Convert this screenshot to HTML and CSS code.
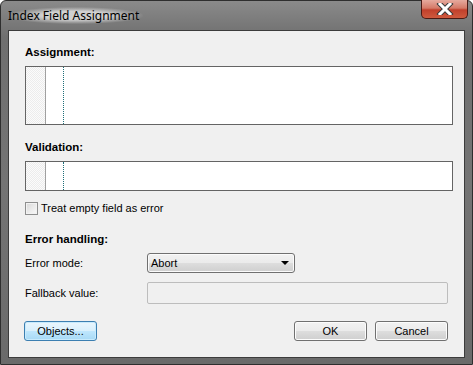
FILE: index.html
```html
<!DOCTYPE html>
<html lang="en">

<head>
    <meta charset="UTF-8">
    <title>Index Field Assignment</title>
    <link rel="stylesheet" href="styles.css">
</head>

<body>

    <div class="window">
        <div class="titlebar">
            <span class="title">Index Field Assignment</span>
            <div class="close">
                <svg width="18" height="12" viewBox="0 0 18 12">
                    <path d="M4 1 L14 11 M14 1 L4 11" stroke="#3a3a3a" stroke-width="5" stroke-linecap="square"/>
                    <path d="M4 1 L14 11 M14 1 L4 11" stroke="#ffffff" stroke-width="3" stroke-linecap="square"/>
                </svg>
            </div>
        </div>

        <div class="client">
            <div class="heading first">Assignment:</div>
            <div class="editor tall">
                <div class="gutter"></div>
                <div class="margin"></div>
            </div>

            <div class="heading">Validation:</div>
            <div class="editor short">
                <div class="gutter"></div>
                <div class="margin"></div>
            </div>

            <label class="check">
                <span class="box"></span>
                Treat empty field as error
            </label>

            <div class="heading errors">Error handling:</div>
            <div class="field mode">
                <span class="label">Error mode:</span>
                <div class="select">
                    <span>Abort</span>
                    <span class="arrow"></span>
                </div>
            </div>
            <div class="field fallback">
                <span class="label">Fallback value:</span>
                <div class="input disabled"></div>
            </div>

            <div class="buttons">
                <button class="btn default">Objects...</button>
                <span class="spacer"></span>
                <button class="btn">OK</button>
                <button class="btn">Cancel</button>
            </div>
        </div>
    </div>

</body>

</html>
```

FILE: styles.css
```css
body {
    margin: 0;
    padding: 0;
    background-color: #ffffff;
    font-family: "Liberation Sans", Arial, sans-serif;
    font-size: 11px;
    color: #000000;
}

.window {
    width: 473px;
    height: 365px;
    box-sizing: border-box;
    border: 1px solid #2e2e2e;
    border-radius: 6px 6px 0 0;
    background: linear-gradient(to bottom, #8a8a8a 0%, #6f6f6f 10%, #747474 50%, #6a6a6a 100%);
    padding: 0 7px 6px 7px;
    display: flex;
    flex-direction: column;
}

.titlebar {
    height: 29px;
    display: flex;
    align-items: flex-start;
    justify-content: space-between;
}

.title {
    font-family: "Noto Sans", "Open Sans", sans-serif;
    font-size: 12px;
    color: #000000;
    margin-top: 6px;
    padding: 0 4px 0 0;
    background: radial-gradient(ellipse at center, rgba(235, 235, 235, 0.75) 35%, rgba(235, 235, 235, 0) 72%);
}

.close {
    width: 47px;
    height: 19px;
    margin-right: -3px;
    margin-top: -1px;
    box-sizing: border-box;
    border: 1px solid #4a1a14;
    border-top: none;
    border-radius: 0 0 5px 5px;
    background: linear-gradient(to bottom, #e6aa9e 0%, #d57a68 45%, #c1402c 55%, #cf5a3e 100%);
    display: flex;
    align-items: center;
    justify-content: center;
}

.client {
    flex: 1;
    background-color: #f0f0f0;
    border: 1px solid #3c3c3c;
    padding: 0 11px 0 16px;
    display: flex;
    flex-direction: column;
}

.heading {
    font-weight: bold;
    font-size: 11.5px;
    line-height: 13px;
    margin-top: 16px;
    margin-bottom: 7px;
}

.heading.first {
    margin-top: 15px;
}

.heading.errors {
    margin-top: 18px;
}

.editor {
    background-color: #ffffff;
    border: 1px solid #646464;
    display: flex;
}

.editor.tall {
    height: 57px;
}

.editor.short {
    height: 28px;
}

.gutter {
    width: 19px;
    border-right: 1px solid #a0a0a0;
    background: repeating-conic-gradient(#ececec 0 25%, #fbfbfb 0 50%) 0 0 / 2px 2px;
}

.margin {
    width: 17px;
    border-right: 1px dotted #1e6e78;
}

.check {
    display: flex;
    align-items: center;
    gap: 3px;
    margin-top: 11px;
    height: 13px;
    line-height: 13px;
}

.box {
    width: 11px;
    height: 11px;
    border: 1px solid #8e8f8f;
    background: linear-gradient(135deg, #d8d8d8 0%, #f4f4f4 80%);
    box-shadow: inset 0 0 0 1px #f2f2f2;
}

.field {
    display: flex;
    align-items: center;
}

.field.mode {
    height: 20px;
}

.field.fallback {
    height: 22px;
    margin-top: 9px;
}

.label {
    width: 122px;
    flex-shrink: 0;
}

.select {
    width: 148px;
    height: 20px;
    box-sizing: border-box;
    border: 1px solid #707070;
    border-radius: 3px;
    background: linear-gradient(to bottom, #f2f2f2 0%, #ebebeb 48%, #dddddd 52%, #cfcfcf 100%);
    box-shadow: inset 0 0 0 1px #fbfbfb;
    display: flex;
    align-items: center;
    justify-content: space-between;
    padding: 0 5px 0 3px;
}

.arrow {
    width: 0;
    height: 0;
    border-left: 4px solid transparent;
    border-right: 4px solid transparent;
    border-top: 4px solid #000000;
}

.input {
    width: 301px;
    height: 22px;
    box-sizing: border-box;
    border: 1px solid #bdbdbd;
    border-radius: 2px;
    background-color: #f0f0f0;
}

.buttons {
    display: flex;
    gap: 8px;
    margin-top: 17px;
    margin-left: -1px;
    padding-right: 5px;
}

.spacer {
    flex: 1;
}

.btn {
    width: 73px;
    height: 20px;
    padding: 0;
    font-family: "Liberation Sans", Arial, sans-serif;
    font-size: 11px;
    color: #000000;
    border: 1px solid #707070;
    border-radius: 3px;
    background: linear-gradient(to bottom, #f2f2f2 0%, #ebebeb 48%, #dddddd 52%, #cfcfcf 100%);
    box-shadow: inset 0 0 0 1px #fcfcfc;
}

.btn.default {
    border-color: #3c7fb1;
    background: linear-gradient(to bottom, #eaf6fd 0%, #d9f0fc 48%, #bee6fd 52%, #a7d9f5 100%);
    box-shadow: inset 0 0 0 1px #c8ebfd;
}
```
